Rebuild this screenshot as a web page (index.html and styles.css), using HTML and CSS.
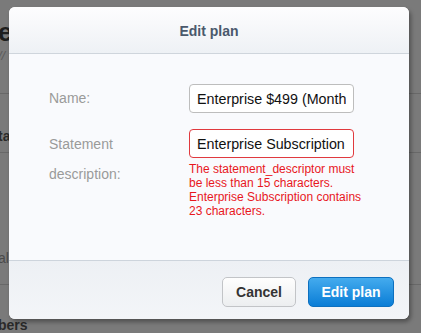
FILE: index.html
```html
<!DOCTYPE html>
<html lang="en">
<head>
    <meta charset="UTF-8">
    <title>Edit plan</title>
    <link rel="stylesheet" href="styles.css">
</head>
<body>
    <!-- page behind the dialog -->
    <div class="page">
        <h1 class="page_title">e</h1>
        <p class="page_sub">//</p>
        <div class="page_rule first"></div>
        <p class="page_head">ta</p>
        <div class="page_rule"></div>
        <p class="page_text">al</p>
        <div class="page_rule"></div>
        <p class="page_head last">bers</p>
    </div>

    <div class="modal">
        <div class="modal_header">Edit plan</div>
        <div class="modal_body">
            <div class="field">
                <label class="field_label">Name:</label>
                <div class="field_input">
                    <input type="text" value="Enterprise $499 (Monthly)">
                </div>
            </div>
            <div class="field">
                <label class="field_label">Statement description:</label>
                <div class="field_input">
                    <input type="text" class="error" value="Enterprise Subscription">
                    <p class="error_text">The statement_descriptor must be less than 15 characters. Enterprise Subscription contains 23 characters.</p>
                </div>
            </div>
        </div>
        <div class="modal_footer">
            <button class="btn">Cancel</button>
            <button class="btn btn_primary">Edit plan</button>
        </div>
    </div>
</body>
</html>
```

FILE: styles.css
```css
html, body{margin:0; height:100%;}
body{background:#7a7a7a; font-family:"Liberation Sans", Arial, sans-serif; overflow:hidden; position:relative;}

/* background page, dimmed */
.page{padding-top:18px; margin-left:-2px;}
.page_title{margin:0; font-size:26px; line-height:28px; color:#1e1e1e; font-weight:bold;}
.page_sub{margin:2px 0 0; font-size:13px; line-height:16px; color:#5a5a5a; font-style:italic;}
.page_rule{border-top:1px solid #686868;}
.page_rule.first{margin-top:29px;}
.page_head{margin:0; padding:35px 0 9px; font-size:14px; font-weight:bold; color:#2a2a2a; line-height:14px;}
.page_text{margin:0; padding:98px 0 19px; font-size:14px; color:#4a4a4a; line-height:14px;}
.page_head.last{padding:33px 0 0;}

/* dialog */
.modal{position:absolute; left:9px; top:7px; width:400px;
    background:#f9fafd; border-radius:6px; overflow:hidden;
    box-shadow:2px 3px 4px rgba(0,0,0,0.35);}
.modal_header{height:46px; line-height:48px; text-align:center;
    font-size:14px; font-weight:bold; color:#4a596c;
    background:linear-gradient(#fdfdfe, #eef1f5);
    border-bottom:1px solid #cfd5dc;}
.modal_body{height:176px; padding:30px 0 0 40px;}

.field{display:flex; margin-bottom:16px;}
.field_label{width:100px; margin-right:40px; font-size:14px; line-height:30px; color:#9a9a9a;}
.field:first-child .field_label{line-height:29px;}
.field_input{width:165px;}
.field_input input{box-sizing:border-box; width:165px; height:29px; margin:0;
    padding:0 7px; border:1px solid #bdbdbd; border-radius:4px; background:#fff;
    font-family:"Liberation Sans", Arial, sans-serif; font-size:14.3px; color:#111;}
.field_input input.error{border-color:#e0393e;}
.error_text{margin:4px 0 0; width:182px; font-size:12px; line-height:14px; color:#e8171d;}

.modal_footer{height:59px; box-sizing:border-box; padding:16px 15px 0 0;
    display:flex; justify-content:flex-end; gap:12px;
    background:linear-gradient(#edf0f4, #f3f5f8);
    border-top:1px solid #cdd4dc;}
.btn{height:30px; padding:0; width:74px; border:1px solid #c2c4c7; border-radius:5px;
    background:linear-gradient(#fefefe, #eceef0);
    font-family:"Liberation Sans", Arial, sans-serif; font-size:14px; font-weight:bold; color:#333;}
.btn_primary{width:86px; border-color:#0d70bf; color:#fff;
    background:linear-gradient(#44abee, #0a7dd6);}
```
